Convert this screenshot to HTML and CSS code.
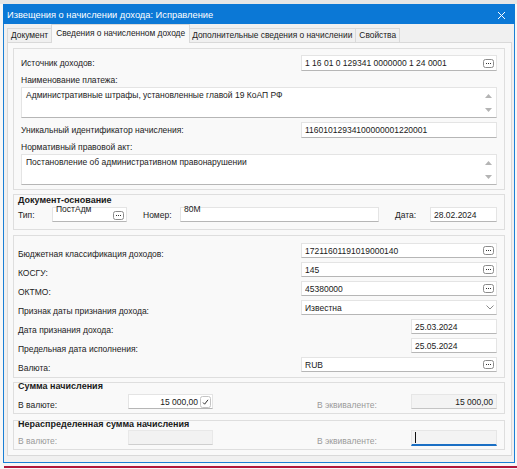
FILE: index.html
```html
<!DOCTYPE html>
<html lang="ru">
<head>
    <meta charset="UTF-8">
    <meta name="viewport" content="width=device-width, initial-scale=1.0">
    <title>Извещения о начислении дохода: Исправление</title>
    <link rel="stylesheet" href="styles.css">
</head>
<body>
    <div class="topstrip"></div>
    <div class="window">
        <div class="titlebar">
            <span>Извещения о начислении дохода: Исправление</span>
            <svg class="close" width="9" height="9" viewBox="0 0 9 9"><path d="M1 1L8 8M8 1L1 8" stroke="#fff" stroke-width="1"/></svg>
        </div>
        <div class="tabs">
            <div class="tab">Документ</div>
            <div class="tab active">Сведения о начисленном доходе</div>
            <div class="tab">Дополнительные сведения о начислении</div>
            <div class="tab">Свойства</div>
        </div>

        <div class="panel">
            <!-- основные сведения -->
            <div class="group g-main">
                <div class="row">
                    <span class="lbl">Источник доходов:</span>
                    <div class="field tall"><span class="val">1 16 01 0 129341 0000000 1 24 0001</span>
                        <svg class="dots" width="11" height="9" viewBox="0 0 11 9"><rect x="0.5" y="0.5" width="10" height="8" rx="2" fill="#fff" stroke="#8c8c8c"/><rect x="3" y="4" width="1" height="1" fill="#333"/><rect x="5" y="4" width="1" height="1" fill="#333"/><rect x="7" y="4" width="1" height="1" fill="#333"/></svg>
                    </div>
                </div>
                <div class="caption">Наименование платежа:</div>
                <div class="memo">
                    <span>Административные штрафы, установленные главой 19 КоАП РФ</span>
                    <svg class="scroll" width="7" height="18" viewBox="0 0 7 18"><path d="M3.5 0L7 4H0Z M0 14H7L3.5 18Z" fill="#b4b4b4"/></svg>
                </div>
                <div class="row row-uin">
                    <span class="lbl">Уникальный идентификатор начисления:</span>
                    <div class="field tall"><span class="val">11601012934100000001220001</span></div>
                </div>
                <div class="caption cap2">Нормативный правовой акт:</div>
                <div class="memo">
                    <span>Постановление об административном правонарушении</span>
                    <svg class="scroll" width="7" height="18" viewBox="0 0 7 18"><path d="M3.5 0L7 4H0Z M0 14H7L3.5 18Z" fill="#b4b4b4"/></svg>
                </div>
            </div>

            <!-- документ-основание -->
            <div class="group g-doc">
                <div class="legend">Документ-основание</div>
                <div class="doc-row">
                    <span class="lbl">Тип:</span>
                    <div class="field high"><span class="val">ПостАдм</span>
                        <svg class="dots" width="11" height="9" viewBox="0 0 11 9"><rect x="0.5" y="0.5" width="10" height="8" rx="2" fill="#fff" stroke="#8c8c8c"/><rect x="3" y="4" width="1" height="1" fill="#333"/><rect x="5" y="4" width="1" height="1" fill="#333"/><rect x="7" y="4" width="1" height="1" fill="#333"/></svg>
                    </div>
                    <span class="lbl pad">Номер:</span>
                    <div class="field high"><span class="val">80М</span></div>
                    <span class="lbl pad">Дата:</span>
                    <div class="field"><span class="val">28.02.2024</span></div>
                </div>
            </div>

            <!-- классификация -->
            <div class="group g-cls">
                <div class="frow">
                    <span class="lbl">Бюджетная классификация доходов:</span>
                    <div class="field"><span class="val">17211601191019000140</span>
                        <svg class="dots" width="11" height="9" viewBox="0 0 11 9"><rect x="0.5" y="0.5" width="10" height="8" rx="2" fill="#fff" stroke="#8c8c8c"/><rect x="3" y="4" width="1" height="1" fill="#333"/><rect x="5" y="4" width="1" height="1" fill="#333"/><rect x="7" y="4" width="1" height="1" fill="#333"/></svg>
                    </div>
                </div>
                <div class="frow">
                    <span class="lbl">КОСГУ:</span>
                    <div class="field"><span class="val">145</span>
                        <svg class="dots" width="11" height="9" viewBox="0 0 11 9"><rect x="0.5" y="0.5" width="10" height="8" rx="2" fill="#fff" stroke="#8c8c8c"/><rect x="3" y="4" width="1" height="1" fill="#333"/><rect x="5" y="4" width="1" height="1" fill="#333"/><rect x="7" y="4" width="1" height="1" fill="#333"/></svg>
                    </div>
                </div>
                <div class="frow">
                    <span class="lbl">ОКТМО:</span>
                    <div class="field"><span class="val">45380000</span>
                        <svg class="dots" width="11" height="9" viewBox="0 0 11 9"><rect x="0.5" y="0.5" width="10" height="8" rx="2" fill="#fff" stroke="#8c8c8c"/><rect x="3" y="4" width="1" height="1" fill="#333"/><rect x="5" y="4" width="1" height="1" fill="#333"/><rect x="7" y="4" width="1" height="1" fill="#333"/></svg>
                    </div>
                </div>
                <div class="frow">
                    <span class="lbl">Признак даты признания дохода:</span>
                    <div class="field"><span class="val">Известна</span>
                        <svg class="chevron" width="8" height="5" viewBox="0 0 8 5"><path d="M0.5 0.5L4 4L7.5 0.5" fill="none" stroke="#8a8a8a"/></svg>
                    </div>
                </div>
                <div class="frow">
                    <span class="lbl">Дата признания дохода:</span>
                    <div class="field date"><span class="val">25.03.2024</span></div>
                </div>
                <div class="frow">
                    <span class="lbl">Предельная дата исполнения:</span>
                    <div class="field date"><span class="val">25.05.2024</span></div>
                </div>
                <div class="frow">
                    <span class="lbl">Валюта:</span>
                    <div class="field"><span class="val">RUB</span>
                        <svg class="dots" width="11" height="9" viewBox="0 0 11 9"><rect x="0.5" y="0.5" width="10" height="8" rx="2" fill="#fff" stroke="#8c8c8c"/><rect x="3" y="4" width="1" height="1" fill="#333"/><rect x="5" y="4" width="1" height="1" fill="#333"/><rect x="7" y="4" width="1" height="1" fill="#333"/></svg>
                    </div>
                </div>
            </div>

            <!-- сумма -->
            <div class="group g-sum">
                <div class="legend">Сумма начисления</div>
                <div class="sum-row">
                    <span class="lbl">В валюте:</span>
                    <div class="field num"><span class="val">15 000,00</span>
                        <svg class="check" width="11" height="12" viewBox="0 0 11 12"><rect x="0.5" y="0.5" width="10" height="11" rx="2" fill="#fff" stroke="#c4c4c4"/><path d="M3 6.5L4.6 8.2L8 3.8" fill="none" stroke="#333" stroke-width="1"/></svg>
                    </div>
                    <span></span>
                    <span class="lbl muted">В эквиваленте:</span>
                    <div class="field num readonly"><span class="val">15 000,00</span></div>
                </div>
            </div>

            <div class="group g-rest">
                <div class="legend">Нераспределенная сумма начисления</div>
                <div class="sum-row">
                    <span class="lbl muted">В валюте:</span>
                    <div class="field disabled"></div>
                    <span></span>
                    <span class="lbl muted">В эквиваленте:</span>
                    <div class="field readonly focused"><span class="caret"></span></div>
                </div>
            </div>
        </div>
    </div>
    <div class="snip-line"></div>
</body>
</html>
```

FILE: styles.css
```css
*{
    margin: 0;
    padding: 0;
    box-sizing: border-box;
}

body{
    width: 517px;
    height: 469px;
    overflow: hidden;
    background-color: #f7f7f7;
    font-family: "Liberation Sans", Arial, sans-serif;
    font-size: 8.5px;
    color: #222;
}

.topstrip{
    height: 4px;
    background-color: #e6e6e6;
}

.window{
    margin-left: 3px;
    width: 512px;
    background-color: #f0f0f0;
    border: 1px solid #1a7fd5;
    border-top: none;
    padding-bottom: 6px;
}

.titlebar{
    height: 20px;
    margin: 0 -1px;
    background-color: #0b78d6;
    color: white;
    font-size: 9.3px;
    display: flex;
    align-items: center;
    justify-content: space-between;
    padding: 2px 9px 0 4px;
}

/* вкладки */
.tabs{
    display: flex;
    align-items: flex-end;
    height: 18px;
    padding-left: 3px;
}
.tab{
    height: 14px;
    line-height: 13px;
    padding: 0 3px;
    border: 1px solid #d9d9d9;
    border-bottom: none;
    border-left: none;
    white-space: nowrap;
    font-size: 8.4px;
}
.tab:first-child{
    border-left: 1px solid #d9d9d9;
}
.tab.active{
    position: relative;
    height: 19px;
    line-height: 17px;
    margin: 0 -1px -1px -1px;
    padding: 0 4px;
    background-color: #f9f9f9;
    border-left: 1px solid #d9d9d9;
}

.panel{
    margin-left: 3px;
    width: 505px;
    background-color: #f9f9f9;
    border: 1px solid #d9d9d9;
    padding: 5px 6px 5px 5px;
}

.group{
    border: 1px solid #dedede;
    padding: 0 7px 0 4px;
}
.legend{
    font-weight: bold;
    font-size: 9px;
    line-height: 10px;
    height: 10px;
    color: #1a1a1a;
}

/* поля */
.field{
    height: 15px;
    background-color: white;
    border: 1px solid #e4e4e4;
    border-bottom-color: #b6b6b6;
    display: flex;
    align-items: center;
    padding: 0 2px 0 3px;
    color: #1a1a1a;
}
.field .val{
    flex: 1;
    white-space: nowrap;
    overflow: hidden;
}
.field.tall{
    height: 16px;
}
.field.num .val{
    text-align: right;
    padding-right: 2px;
}
.field.readonly{
    background-color: #f3f3f3;
    border-color: #e6e6e6;
    border-bottom-color: #c4c4c4;
}
.field.disabled{
    background-color: #f2f2f2;
    border-color: #e8e8e8;
    border-bottom-color: #cfcfcf;
}
.field.focused{
    height: 16px;
    border-bottom: 2px solid #1a6fc4;
}
.caret{
    width: 1px;
    height: 11px;
    background-color: #111;
}
.dots, .chevron, .check{
    flex-shrink: 0;
}

.lbl{
    white-space: nowrap;
}
.muted{
    color: #9a9a9a;
}

/* блок 1 */
.g-main{
    padding: 6px 7px 4px 7px;
}
.row{
    display: grid;
    grid-template-columns: 280px 196px;
    align-items: center;
}
.row-uin{
    margin-top: 4px;
}
.caption{
    margin-top: 2px;
    height: 14px;
    line-height: 14px;
}
.caption.cap2{
    margin-top: 3px;
    height: 13px;
    line-height: 13px;
}
.memo{
    height: 31px;
    background-color: white;
    border: 1px solid #e4e4e4;
    border-bottom-color: #b6b6b6;
    padding: 2px 4px;
    display: flex;
    justify-content: space-between;
    line-height: 10px;
}
.memo .scroll{
    margin-top: 4px;
}

/* документ-основание */
.g-doc{
    margin-top: 4px;
    padding-bottom: 7px;
}
.doc-row{
    margin-top: 1px;
    display: grid;
    grid-template-columns: 34px 75px 53px 199px 51px 67px;
    align-items: end;
    height: 16px;
}
.doc-row .lbl{
    padding-bottom: 2px;
}
.doc-row .pad{
    padding-left: 16px;
}
.field.high{
    align-items: flex-start;
    overflow: visible;
}
.field.high .val{
    margin-top: -4px;
    overflow: visible;
}
.field.high .dots{
    margin-top: 3px;
}

/* классификация */
.g-cls{
    margin-top: 5px;
    padding: 7px 7px 1px 4px;
}
.frow{
    display: grid;
    grid-template-columns: 283px 196px;
    height: 19px;
}
.frow .lbl{
    padding-top: 4px;
    line-height: 15px;
}
.field.date{
    width: 86px;
    justify-self: end;
}

/* суммы */
.g-sum{
    margin-top: 4px;
}
.g-sum .legend, .g-rest .legend{
    margin-top: -2px;
}
.g-sum .sum-row{
    margin-top: 3px;
}
.g-rest{
    margin-top: 6px;
}
.g-rest .sum-row{
    margin-top: 1px;
}
.sum-row{
    display: grid;
    grid-template-columns: 110px 85px 104px 94px 86px;
    height: 19px;
}
.sum-row .lbl{
    padding-top: 4px;
    line-height: 15px;
}
.sum-row .field{
    padding-right: 1px;
}

.snip-line{
    margin: 3px 0 0 4px;
    height: 2px;
    background-color: #b0173c;
}
```
